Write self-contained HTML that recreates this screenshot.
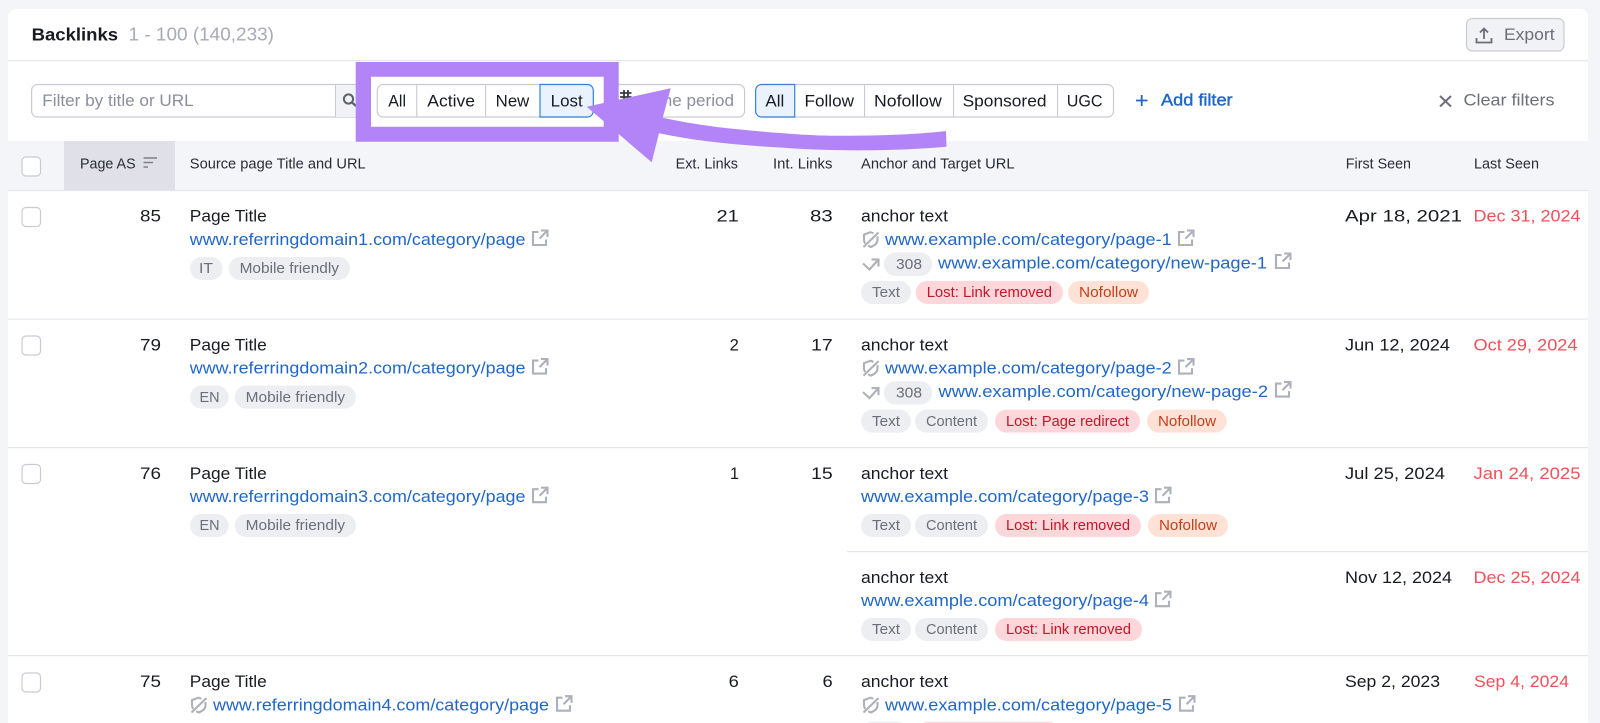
<!DOCTYPE html>
<html><head><meta charset="utf-8"><title>Backlinks</title>
<style>
html,body{margin:0;padding:0;background:#f4f5f9;width:1600px;height:723px;overflow:hidden}
svg{display:block}
text{font-family:"Liberation Sans",sans-serif;font-size:16.5px;fill:#191b23}
.u{fill:#2167c8}
.r{fill:#f2505a}
.h{font-size:15px;fill:#2a2c35}
.t{font-size:15px;fill:#6c6e79}
.l{font-size:15px;fill:#c4162a}
.n{font-size:15px;fill:#c2401c}
.g{fill:#8b8e9d}
.ic{fill:none;stroke:#aeb0ba;stroke-width:2.1}
</style></head><body>
<svg width="1600" height="723" viewBox="0 0 1600 723" xmlns="http://www.w3.org/2000/svg">
<defs>
<g id="ext" class="ic"><path d="M7.5 4H2V17H15V11.5"/><path d="M10 2.5H16.5V9M16 3L8.5 10.5"/></g>
<g id="sh" class="ic"><path d="M11.5 2.3L8.5 1.2L2 3.6V9C2 10.3 2.5 11.4 3.2 12.4"/><path d="M15.5 5.5V9C15.5 12 12.5 14.5 8.7 16C7.8 15.6 7 15.2 6.2 14.6"/><path d="M1.5 16L16.5 1.5"/></g>
<g id="rd" class="ic"><path d="M1 5L7.5 11L16 1.5"/><path d="M9.5 1H16.5V8"/></g>
<rect id="cb" width="18.5" height="19" rx="4" fill="#fff" stroke="#c9cbd4" stroke-width="1.2"/>
</defs>

<rect x="8" y="9" width="1580" height="720" rx="8" fill="#fff"/>
<rect x="8" y="60" width="1580" height="1.2" fill="#e6e7ed"/>

<text x="31.6" y="40.7" font-weight="700" style="font-size:17.5px" textLength="86.5" lengthAdjust="spacingAndGlyphs">Backlinks</text>
<text x="128.5" y="40.7" style="font-size:18px;fill:#a8aab5" textLength="145.5" lengthAdjust="spacingAndGlyphs">1 - 100 (140,233)</text>

<rect x="1466.5" y="18.5" width="97.5" height="32.5" rx="6" fill="#f1f2f5" stroke="#c9cbd4" stroke-width="1.2"/>
<path d="M1476.5 38V42.5H1491.5V38M1484 39V29M1480 32.5L1484 28.5L1488 32.5" fill="none" stroke="#6c6e79" stroke-width="1.8"/>
<text x="1504" y="40" style="fill:#6c6e79" textLength="50.6" lengthAdjust="spacingAndGlyphs">Export</text>

<!-- search -->
<rect x="31.6" y="84.5" width="330" height="32.5" rx="6" fill="#fff" stroke="#c9cbd4" stroke-width="1.2"/>
<path d="M335.5 85H356V117H335.5Z" fill="#f1f2f5"/>
<rect x="335" y="85" width="1" height="32" fill="#c9cbd4"/>
<text x="42.3" y="106" class="g" textLength="151.4" lengthAdjust="spacingAndGlyphs">Filter by title or URL</text>
<circle cx="348.5" cy="99" r="4.6" fill="none" stroke="#5f616c" stroke-width="2"/>
<path d="M352 102.5L356 106" stroke="#5f616c" stroke-width="2.2"/>

<!-- date -->
<rect x="608" y="84.5" width="136.6" height="32.5" rx="6" fill="#fff" stroke="#c9cbd4" stroke-width="1.2"/>
<text x="658" y="106" class="g" textLength="76" lengthAdjust="spacingAndGlyphs">the period</text>
<path d="M620 93H631.5M624 90V100M628 90V100M620 97H631.5" fill="none" stroke="#3a3c45" stroke-width="1.8"/>

<!-- seg 1 -->
<rect x="377.3" y="84.5" width="216" height="32.5" rx="6" fill="#fff" stroke="#c9cbd4" stroke-width="1.2"/>
<path d="M540 84.5H587.3A6 6 0 0 1 593.3 90.5V111A6 6 0 0 1 587.3 117H540Z" fill="#e9f2fd" stroke="#3583db" stroke-width="1.2"/>
<rect x="416.2" y="85" width="1.1" height="32" fill="#c9cbd4"/>
<rect x="485" y="85" width="1.1" height="32" fill="#c9cbd4"/>
<text x="388.3" y="106.5" textLength="17.7" lengthAdjust="spacingAndGlyphs">All</text>
<text x="427.3" y="106.5" textLength="47.7" lengthAdjust="spacingAndGlyphs">Active</text>
<text x="495.7" y="106.5" textLength="33.6" lengthAdjust="spacingAndGlyphs">New</text>
<text x="550.7" y="106.5" textLength="32" lengthAdjust="spacingAndGlyphs">Lost</text>

<!-- seg 2 -->
<rect x="755.6" y="84.5" width="357.9" height="32.5" rx="6" fill="#fff" stroke="#c9cbd4" stroke-width="1.2"/>
<path d="M794.7 84.5H761.6A6 6 0 0 0 755.6 90.5V111A6 6 0 0 0 761.6 117H794.7Z" fill="#e9f2fd" stroke="#3583db" stroke-width="1.2"/>
<rect x="864" y="85" width="1.1" height="32" fill="#c9cbd4"/>
<rect x="953" y="85" width="1.1" height="32" fill="#c9cbd4"/>
<rect x="1057" y="85" width="1.1" height="32" fill="#c9cbd4"/>
<text x="765.4" y="106.5" textLength="18.9" lengthAdjust="spacingAndGlyphs">All</text>
<text x="804.5" y="106.5" textLength="49.5" lengthAdjust="spacingAndGlyphs">Follow</text>
<text x="874" y="106.5" textLength="67.7" lengthAdjust="spacingAndGlyphs">Nofollow</text>
<text x="962.6" y="106.5" textLength="83.9" lengthAdjust="spacingAndGlyphs">Sponsored</text>
<text x="1066.7" y="106.5" textLength="35.8" lengthAdjust="spacingAndGlyphs">UGC</text>

<path d="M1136 100.5H1147.5M1141.7 95V106" stroke="#2167c8" stroke-width="1.8"/>
<text x="1161" y="105.5" style="fill:#2167c8;stroke:#2167c8;stroke-width:.4px" textLength="71.6" lengthAdjust="spacingAndGlyphs">Add filter</text>
<path d="M1440 96L1451 106.5M1451 96L1440 106.5" stroke="#6c6e79" stroke-width="2"/>
<text x="1463.5" y="105.5" style="fill:#6c6e79" textLength="91" lengthAdjust="spacingAndGlyphs">Clear filters</text>

<!-- table head -->
<rect x="8" y="141" width="1580" height="49" fill="#f4f5f9"/>
<rect x="64" y="141" width="111" height="49" fill="#e0e1e8"/>
<rect x="8" y="190" width="1580" height="1.2" fill="#e6e7ed"/>
<use href="#cb" x="22" y="157"/>
<text x="80" y="168.5" class="h" textLength="55.6" lengthAdjust="spacingAndGlyphs">Page AS</text>
<path d="M143.5 158H157M143.5 162.5H153M143.5 167H148" stroke="#7c7e8a" stroke-width="1.6"/>
<text x="189.8" y="168.5" class="h" textLength="175.9" lengthAdjust="spacingAndGlyphs">Source page Title and URL</text>
<text x="675.6" y="168.5" class="h" textLength="62.4" lengthAdjust="spacingAndGlyphs">Ext. Links</text>
<text x="773" y="168.5" class="h" textLength="59.4" lengthAdjust="spacingAndGlyphs">Int. Links</text>
<text x="861" y="168.5" class="h" textLength="153.6" lengthAdjust="spacingAndGlyphs">Anchor and Target URL</text>
<text x="1345.8" y="168.5" class="h" textLength="65.2" lengthAdjust="spacingAndGlyphs">First Seen</text>
<text x="1474" y="168.5" class="h" textLength="65" lengthAdjust="spacingAndGlyphs">Last Seen</text>

<!-- dividers -->
<rect x="8" y="318.5" width="1580" height="1.2" fill="#e6e7ed"/>
<rect x="8" y="447" width="1580" height="1.2" fill="#e6e7ed"/>
<rect x="847" y="551" width="741" height="1.2" fill="#e6e7ed"/>
<rect x="8" y="655" width="1580" height="1.2" fill="#e6e7ed"/>

<!-- ROW 1 -->
<use href="#cb" x="22" y="207.5"/>
<text x="140" y="221.7" textLength="21" lengthAdjust="spacingAndGlyphs">85</text>
<text x="189.8" y="221.7" textLength="77" lengthAdjust="spacingAndGlyphs">Page Title</text>
<text x="189.8" y="245" class="u" textLength="335.7" lengthAdjust="spacingAndGlyphs">www.referringdomain1.com/category/page</text>
<use href="#ext" x="531" y="228"/>
<rect x="190" y="257" width="32.5" height="23" rx="11.5" fill="#eceef2"/>
<text x="199" y="273.2" class="t" textLength="14" lengthAdjust="spacingAndGlyphs">IT</text>
<rect x="228.6" y="257" width="121.4" height="23" rx="11.5" fill="#eceef2"/>
<text x="239.6" y="273.2" class="t" textLength="99.4" lengthAdjust="spacingAndGlyphs">Mobile friendly</text>
<text x="716.5" y="221.7" textLength="22.3" lengthAdjust="spacingAndGlyphs">21</text>
<text x="810" y="221.7" textLength="22.7" lengthAdjust="spacingAndGlyphs">83</text>
<text x="861" y="221.7" textLength="87" lengthAdjust="spacingAndGlyphs">anchor text</text>
<use href="#sh" x="862" y="231"/>
<text x="885" y="245" class="u" textLength="286.7" lengthAdjust="spacingAndGlyphs">www.example.com/category/page-1</text>
<use href="#ext" x="1177" y="228"/>
<use href="#rd" x="862" y="258.5"/>
<rect x="884" y="252.5" width="48" height="23.5" rx="11.7" fill="#eceef2"/>
<text x="896" y="269" class="t" textLength="26" lengthAdjust="spacingAndGlyphs">308</text>
<text x="938" y="268.4" class="u" textLength="329" lengthAdjust="spacingAndGlyphs">www.example.com/category/new-page-1</text>
<use href="#ext" x="1274" y="251"/>
<rect x="861" y="281" width="50" height="23" rx="11.5" fill="#eceef2"/>
<text x="872" y="297.2" class="t" textLength="28" lengthAdjust="spacingAndGlyphs">Text</text>
<rect x="915.7" y="281" width="147.3" height="23" rx="11.5" fill="#ffd6d9"/>
<text x="926.7" y="297.2" class="l" textLength="125.3" lengthAdjust="spacingAndGlyphs">Lost: Link removed</text>
<rect x="1068" y="281" width="81" height="23" rx="11.5" fill="#ffe1d6"/>
<text x="1079" y="297.2" class="n" textLength="59" lengthAdjust="spacingAndGlyphs">Nofollow</text>
<text x="1345" y="221.7" textLength="117" lengthAdjust="spacingAndGlyphs">Apr 18, 2021</text>
<text x="1473.5" y="221.7" class="r" textLength="107" lengthAdjust="spacingAndGlyphs">Dec 31, 2024</text>

<!-- ROW 2 -->
<use href="#cb" x="22" y="336"/>
<text x="140" y="350.3" textLength="21" lengthAdjust="spacingAndGlyphs">79</text>
<text x="189.8" y="350.3" textLength="77" lengthAdjust="spacingAndGlyphs">Page Title</text>
<text x="189.8" y="373.6" class="u" textLength="335.7" lengthAdjust="spacingAndGlyphs">www.referringdomain2.com/category/page</text>
<use href="#ext" x="531" y="356.6"/>
<rect x="190" y="385.6" width="38.6" height="23" rx="11.5" fill="#eceef2"/>
<text x="199.5" y="401.8" class="t" textLength="20" lengthAdjust="spacingAndGlyphs">EN</text>
<rect x="234.7" y="385.6" width="121.3" height="23" rx="11.5" fill="#eceef2"/>
<text x="245.7" y="401.8" class="t" textLength="99.4" lengthAdjust="spacingAndGlyphs">Mobile friendly</text>
<text x="729.6" y="350.3" textLength="9.2" lengthAdjust="spacingAndGlyphs">2</text>
<text x="811" y="350.3" textLength="21.7" lengthAdjust="spacingAndGlyphs">17</text>
<text x="861" y="350.3" textLength="87" lengthAdjust="spacingAndGlyphs">anchor text</text>
<use href="#sh" x="862" y="359.6"/>
<text x="885" y="373.6" class="u" textLength="286.7" lengthAdjust="spacingAndGlyphs">www.example.com/category/page-2</text>
<use href="#ext" x="1177" y="356.6"/>
<use href="#rd" x="862" y="387.1"/>
<rect x="884" y="381.1" width="48" height="23.5" rx="11.7" fill="#eceef2"/>
<text x="896" y="397.6" class="t" textLength="26" lengthAdjust="spacingAndGlyphs">308</text>
<text x="938.5" y="397" class="u" textLength="329.5" lengthAdjust="spacingAndGlyphs">www.example.com/category/new-page-2</text>
<use href="#ext" x="1274" y="379.6"/>
<rect x="861" y="409.6" width="50" height="23" rx="11.5" fill="#eceef2"/>
<text x="872" y="425.8" class="t" textLength="28" lengthAdjust="spacingAndGlyphs">Text</text>
<rect x="915" y="409.6" width="73" height="23" rx="11.5" fill="#eceef2"/>
<text x="926" y="425.8" class="t" textLength="51" lengthAdjust="spacingAndGlyphs">Content</text>
<rect x="995" y="409.6" width="145" height="23" rx="11.5" fill="#ffd6d9"/>
<text x="1006" y="425.8" class="l" textLength="123" lengthAdjust="spacingAndGlyphs">Lost: Page redirect</text>
<rect x="1147" y="409.6" width="79.6" height="23" rx="11.5" fill="#ffe1d6"/>
<text x="1158" y="425.8" class="n" textLength="58" lengthAdjust="spacingAndGlyphs">Nofollow</text>
<text x="1345" y="350.3" textLength="105" lengthAdjust="spacingAndGlyphs">Jun 12, 2024</text>
<text x="1473.5" y="350.3" class="r" textLength="104" lengthAdjust="spacingAndGlyphs">Oct 29, 2024</text>

<!-- ROW 3 -->
<use href="#cb" x="22" y="464.5"/>
<text x="140" y="478.9" textLength="21" lengthAdjust="spacingAndGlyphs">76</text>
<text x="189.8" y="478.9" textLength="77" lengthAdjust="spacingAndGlyphs">Page Title</text>
<text x="189.8" y="502.2" class="u" textLength="335.7" lengthAdjust="spacingAndGlyphs">www.referringdomain3.com/category/page</text>
<use href="#ext" x="531" y="485.2"/>
<rect x="190" y="514" width="38.6" height="23" rx="11.5" fill="#eceef2"/>
<text x="199.5" y="530.2" class="t" textLength="20" lengthAdjust="spacingAndGlyphs">EN</text>
<rect x="234.7" y="514" width="121.3" height="23" rx="11.5" fill="#eceef2"/>
<text x="245.7" y="530.2" class="t" textLength="99.4" lengthAdjust="spacingAndGlyphs">Mobile friendly</text>
<text x="730" y="478.9" textLength="9" lengthAdjust="spacingAndGlyphs">1</text>
<text x="811" y="478.9" textLength="21.7" lengthAdjust="spacingAndGlyphs">15</text>
<text x="861" y="478.9" textLength="87" lengthAdjust="spacingAndGlyphs">anchor text</text>
<text x="861" y="502.2" class="u" textLength="288" lengthAdjust="spacingAndGlyphs">www.example.com/category/page-3</text>
<use href="#ext" x="1154" y="485.2"/>
<rect x="861" y="514" width="50" height="23" rx="11.5" fill="#eceef2"/>
<text x="872" y="530.2" class="t" textLength="28" lengthAdjust="spacingAndGlyphs">Text</text>
<rect x="915" y="514" width="73" height="23" rx="11.5" fill="#eceef2"/>
<text x="926" y="530.2" class="t" textLength="51" lengthAdjust="spacingAndGlyphs">Content</text>
<rect x="995" y="514" width="146" height="23" rx="11.5" fill="#ffd6d9"/>
<text x="1006" y="530.2" class="l" textLength="124" lengthAdjust="spacingAndGlyphs">Lost: Link removed</text>
<rect x="1148" y="514" width="80" height="23" rx="11.5" fill="#ffe1d6"/>
<text x="1159" y="530.2" class="n" textLength="58" lengthAdjust="spacingAndGlyphs">Nofollow</text>
<text x="1345" y="478.9" textLength="100" lengthAdjust="spacingAndGlyphs">Jul 25, 2024</text>
<text x="1473.5" y="478.9" class="r" textLength="107" lengthAdjust="spacingAndGlyphs">Jan 24, 2025</text>

<!-- ROW 3b -->
<text x="861" y="582.9" textLength="87" lengthAdjust="spacingAndGlyphs">anchor text</text>
<text x="861" y="606.2" class="u" textLength="288" lengthAdjust="spacingAndGlyphs">www.example.com/category/page-4</text>
<use href="#ext" x="1154" y="589.2"/>
<rect x="861" y="618" width="50" height="23" rx="11.5" fill="#eceef2"/>
<text x="872" y="634.2" class="t" textLength="28" lengthAdjust="spacingAndGlyphs">Text</text>
<rect x="915" y="618" width="73" height="23" rx="11.5" fill="#eceef2"/>
<text x="926" y="634.2" class="t" textLength="51" lengthAdjust="spacingAndGlyphs">Content</text>
<rect x="995" y="618" width="147" height="23" rx="11.5" fill="#ffd6d9"/>
<text x="1006" y="634.2" class="l" textLength="125" lengthAdjust="spacingAndGlyphs">Lost: Link removed</text>
<text x="1345" y="582.9" textLength="107" lengthAdjust="spacingAndGlyphs">Nov 12, 2024</text>
<text x="1473.5" y="582.9" class="r" textLength="107" lengthAdjust="spacingAndGlyphs">Dec 25, 2024</text>

<!-- ROW 4 -->
<use href="#cb" x="22" y="673"/>
<text x="140" y="687" textLength="21" lengthAdjust="spacingAndGlyphs">75</text>
<text x="189.8" y="687" textLength="77" lengthAdjust="spacingAndGlyphs">Page Title</text>
<use href="#sh" x="190" y="696.5"/>
<text x="213" y="710.7" class="u" textLength="336" lengthAdjust="spacingAndGlyphs">www.referringdomain4.com/category/page</text>
<use href="#ext" x="555" y="693.7"/>
<text x="728.6" y="687" textLength="10.2" lengthAdjust="spacingAndGlyphs">6</text>
<text x="822.5" y="687" textLength="10.2" lengthAdjust="spacingAndGlyphs">6</text>
<text x="861" y="687" textLength="87" lengthAdjust="spacingAndGlyphs">anchor text</text>
<use href="#sh" x="862" y="696.5"/>
<text x="885" y="710.7" class="u" textLength="287" lengthAdjust="spacingAndGlyphs">www.example.com/category/page-5</text>
<use href="#ext" x="1178" y="693.7"/>
<rect x="865" y="721.7" width="40" height="12" rx="6" fill="#eceef2"/>
<rect x="921" y="721.7" width="135" height="12" rx="6" fill="#ffd6d9"/>
<text x="1345" y="687" textLength="95" lengthAdjust="spacingAndGlyphs">Sep 2, 2023</text>
<text x="1474" y="687" class="r" textLength="95" lengthAdjust="spacingAndGlyphs">Sep 4, 2024</text>

<!-- purple annotation -->
<path fill-rule="evenodd" fill="#b384f7" d="M355.7 62H618.7V141.7H355.7ZM371 76.7V126.7H603.7V76.7Z"/>
<path fill="#b384f7" d="M586.7 106.7L670.7 88.3L662.7 117.7C700 126 740 130 780 133C810 135.5 830 136 850 135.7C890 135.5 920 134 946 131L946.5 146.7C915 149.5 880 150.5 850 150.3C825 150 805 149.5 780 147.5C735 145 695 141 659 133.3L651.7 162.3Z"/>
</svg>
</body></html>
